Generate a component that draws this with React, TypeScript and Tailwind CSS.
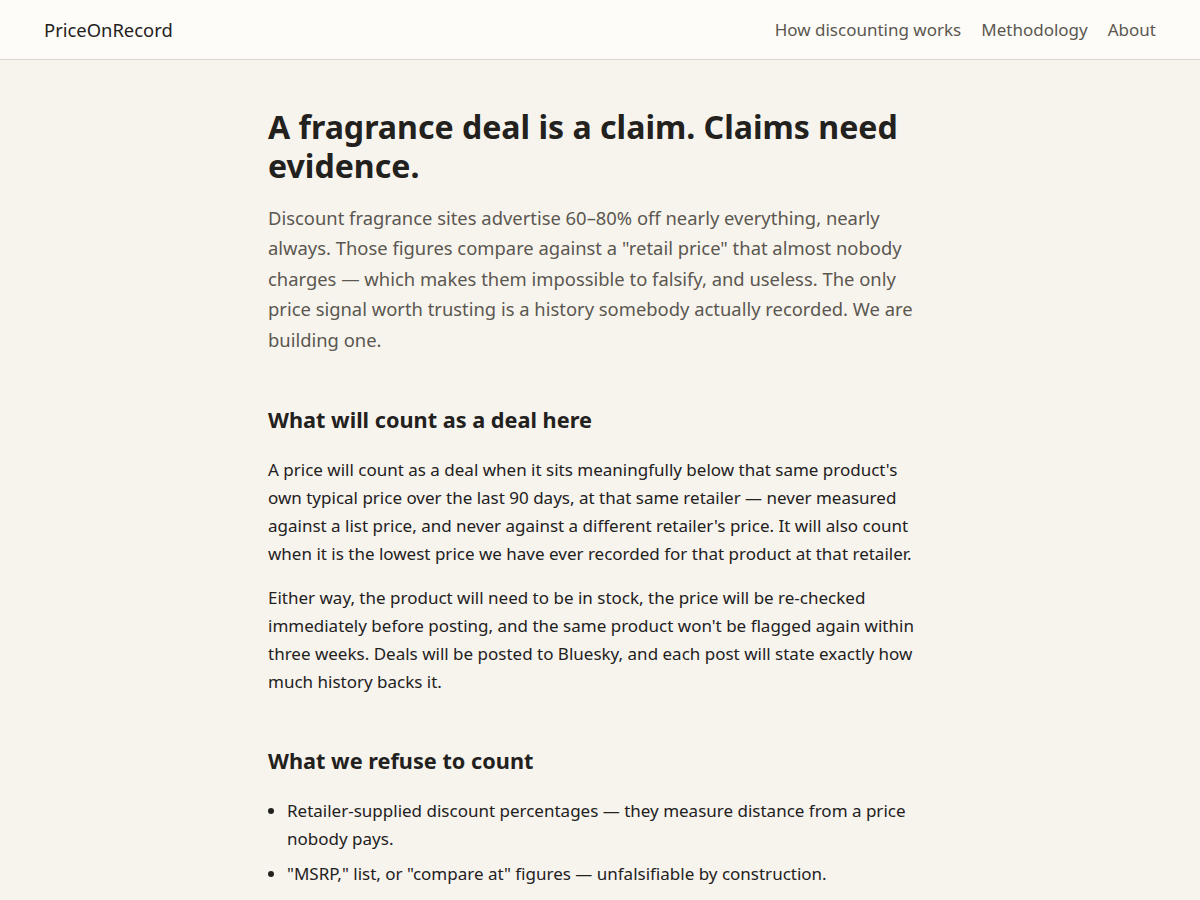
import React from "react";

export default function App() {
  return (
    <div className="min-h-screen bg-[#f7f4ee] text-[#23211d]" style={{ fontFamily: '"Noto Sans", "Open Sans", sans-serif' }}>
      <header className="h-[60px] bg-[#fdfcf8] border-b border-[#d9d5cd] flex items-center justify-between px-[44px]">
        <div className="text-[18.4px] text-[#23211d]">PriceOnRecord</div>
        <nav className="flex gap-[20px] text-[17px] text-[#5b5750]">
          <a>How discounting works</a>
          <a>Methodology</a>
          <a>About</a>
        </nav>
      </header>
      <main className="w-[664px] mx-auto pt-[47px] pb-16">
        <h1 className="text-[32.1px] font-bold leading-[39px] text-[#23211d]">
          A fragrance deal is a claim. Claims need evidence.
        </h1>
        <p className="mt-[18px] text-[18.4px] leading-[30.4px] text-[#5b5750]">
          Discount fragrance sites advertise 60–80% off nearly everything, nearly always. Those figures compare against a "retail price" that almost nobody charges — which makes them impossible to falsify, and useless. The only price signal worth trusting is a history somebody actually recorded. We are building one.
        </p>
        <h2 className="mt-[50px] text-[21.7px] font-bold leading-[29px]">What will count as a deal here</h2>
        <p className="mt-[22px] text-[17px] leading-[28px]">
          A price will count as a deal when it sits meaningfully below that same product's own typical price over the last 90 days, at that same retailer — never measured against a list price, and never against a different retailer's price. It will also count when it is the lowest price we have ever recorded for that product at that retailer.
        </p>
        <p className="mt-[16px] text-[17px] leading-[28px]">
          Either way, the product will need to be in stock, the price will be re-checked immediately before posting, and the same product won't be flagged again within three weeks. Deals will be posted to Bluesky, and each post will state exactly how much history backs it.
        </p>
        <h2 className="mt-[50px] text-[21.7px] font-bold leading-[29px]">What we refuse to count</h2>
        <ul className="mt-[22px] list-disc pl-[19px] text-[17px] leading-[28px] flex flex-col gap-[7px]">
          <li>Retailer-supplied discount percentages — they measure distance from a price nobody pays.</li>
          <li>"MSRP," list, or "compare at" figures — unfalsifiable by construction.</li>
        </ul>
      </main>
    </div>
  );
}
